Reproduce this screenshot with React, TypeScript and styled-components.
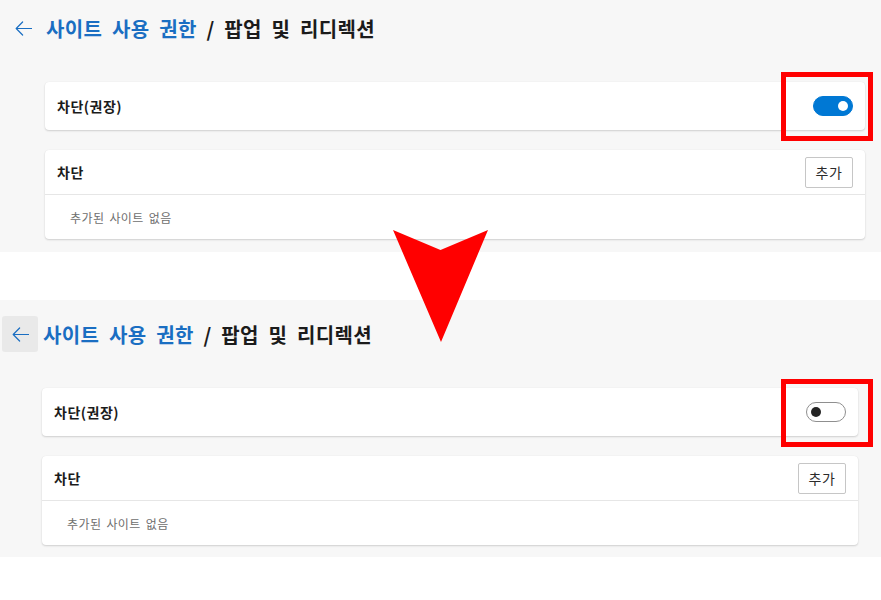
import React from "react";
import styled, { createGlobalStyle } from "styled-components";

const GlobalStyle = createGlobalStyle`
  html, body { margin: 0; padding: 0; background: #ffffff; }
  body { font-family: "Noto Sans CJK KR", "Noto Sans", sans-serif; }
  * { box-sizing: border-box; }
`;

const Page = styled.div`
  position: relative;
  width: 881px;
  height: 600px;
  display: flex;
  flex-direction: column;
  gap: 48px;
  background: #ffffff;
  overflow: hidden;
`;

const Panel = styled.section<{ $top: number; $left: number; $right: number; $bottom: number }>`
  background: #f7f7f7;
  padding: ${(p) => p.$top}px ${(p) => p.$right}px ${(p) => p.$bottom}px ${(p) => p.$left}px;
  display: flex;
  flex-direction: column;
`;

const Header = styled.div`
  display: flex;
  align-items: center;
  gap: 5px;
  height: 36px;
`;

const BackButton = styled.button<{ $hover?: boolean }>`
  width: 36px;
  height: 36px;
  border: none;
  border-radius: 3px;
  padding: 0;
  display: flex;
  align-items: center;
  justify-content: center;
  background: ${(p) => (p.$hover ? "#e9e9e9" : "transparent")};
  cursor: pointer;
`;

const Title = styled.h1`
  margin: 0;
  font-size: 20px;
  font-weight: 700;
  color: #1b1b1b;
  word-spacing: 5px;
  letter-spacing: 0.3px;
  white-space: nowrap;
`;

const TitleLink = styled.span`
  color: #1a6ec2;
`;

const Cards = styled.div`
  margin: 36px 0 0 40px;
  display: flex;
  flex-direction: column;
  gap: 20px;
`;

const Card = styled.div`
  background: #ffffff;
  border-radius: 4px;
  box-shadow: 0 1px 2px rgba(0, 0, 0, 0.16), 0 0 1px rgba(0, 0, 0, 0.08);
  display: flex;
  flex-direction: column;
`;

const ToggleRow = styled.div`
  height: 48px;
  display: flex;
  align-items: center;
  justify-content: space-between;
  padding: 0 12px;
`;

const Label = styled.span`
  font-size: 14px;
  font-weight: 600;
  color: #1b1b1b;
  letter-spacing: 0.5px;
`;

const ListHeader = styled.div`
  height: 45px;
  display: flex;
  align-items: center;
  justify-content: space-between;
  padding: 0 12px;
  border-bottom: 1px solid #e6e6e6;
`;

const EmptyRow = styled.div`
  height: 44px;
  display: flex;
  align-items: center;
  padding-left: 25px;
  font-size: 12px;
  letter-spacing: 0.4px;
  word-spacing: 2px;
  color: #6e6e6e;
`;

const AddButton = styled.button`
  width: 48px;
  height: 31px;
  border: 1px solid #c6c6c6;
  border-radius: 2px;
  background: #ffffff;
  font-family: "Noto Sans CJK KR", "Noto Sans", sans-serif;
  font-size: 14px;
  color: #2b2b2b;
  letter-spacing: 0.5px;
  padding: 0;
`;

const Switch = styled.div<{ $on: boolean }>`
  width: 40px;
  height: 20px;
  border-radius: 10px;
  background: ${(p) => (p.$on ? "#0078d4" : "#ffffff")};
  border: 1px solid ${(p) => (p.$on ? "#0078d4" : "#8f8f8f")};
  display: flex;
  align-items: center;
  justify-content: ${(p) => (p.$on ? "flex-end" : "flex-start")};
  padding: 0 4px;
`;

const Knob = styled.span<{ $on: boolean }>`
  width: 10px;
  height: 10px;
  border-radius: 50%;
  background: ${(p) => (p.$on ? "#ffffff" : "#242424")};
`;

const Highlight = styled.div<{ $x: number; $y: number; $h: number }>`
  position: absolute;
  left: ${(p) => p.$x}px;
  top: ${(p) => p.$y}px;
  width: 92px;
  height: ${(p) => p.$h}px;
  border: 5px solid #ff0000;
`;

const ArrowMark = styled.svg`
  position: absolute;
  left: 393px;
  top: 230px;
`;

const BackArrow = () => (
  <svg width="17" height="15" viewBox="0 0 17 15" fill="none">
    <path d="M16.5 7.5H1.2M7.6 1L1.2 7.5L7.6 14" stroke="#1a6ec2" strokeWidth="1.2" strokeLinecap="round" strokeLinejoin="round" />
  </svg>
);

type ShotProps = { top: number; left: number; right: number; bottom: number; on: boolean; hover?: boolean };

const Shot = ({ top, left, right, bottom, on, hover }: ShotProps) => (
  <Panel $top={top} $left={left} $right={right} $bottom={bottom}>
    <Header>
      <BackButton $hover={hover} aria-label="뒤로">
        <BackArrow />
      </BackButton>
      <Title>
        <TitleLink>사이트 사용 권한</TitleLink> / 팝업 및 리디렉션
      </Title>
    </Header>
    <Cards>
      <Card>
        <ToggleRow>
          <Label>차단(권장)</Label>
          <Switch $on={on}>
            <Knob $on={on} />
          </Switch>
        </ToggleRow>
      </Card>
      <Card>
        <ListHeader>
          <Label>차단</Label>
          <AddButton>추가</AddButton>
        </ListHeader>
        <EmptyRow>추가된 사이트 없음</EmptyRow>
      </Card>
    </Cards>
  </Panel>
);

export default function App() {
  return (
    <>
      <GlobalStyle />
      <Page>
        <Shot top={10} left={5} right={16} bottom={13} on />
        <Shot top={16} left={2} right={23} bottom={12} on={false} hover />
        <Highlight $x={781} $y={72} $h={69} />
        <Highlight $x={781} $y={379} $h={68} />
        <ArrowMark width="96" height="113" viewBox="393 230 96 113">
          <polygon points="393,230 440.5,250 488,230 441,342" fill="#ff0000" />
        </ArrowMark>
      </Page>
    </>
  );
}
